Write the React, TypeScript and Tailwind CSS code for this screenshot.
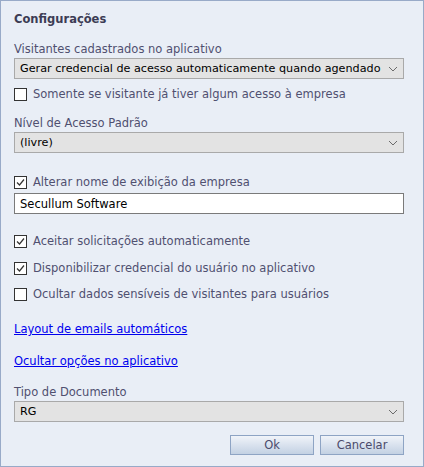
import React from "react";

const Chevron = () => (
  <svg width="10" height="6" viewBox="0 0 10 6" className="shrink-0">
    <path d="M1 1 L5 5 L9 1" fill="none" stroke="#6b6b6b" strokeWidth="1" />
  </svg>
);

const Select = ({ value }: { value: string }) => (
  <div className="flex h-[21px] items-center justify-between gap-[4px] border border-[#a9a9a9] bg-[#e3e3e3] pl-[5px] pr-[5px] text-[11.2px] text-black">
    <span className="whitespace-nowrap">{value}</span>
    <Chevron />
  </div>
);

const Check = ({ checked, label }: { checked?: boolean; label: string }) => (
  <div className="flex h-[14px] items-center gap-[6px]">
    <div className="flex h-[13px] w-[13px] shrink-0 items-center justify-center border border-[#333333] bg-white">
      {checked && (
        <svg width="11" height="11" viewBox="0 0 11 11">
          <path d="M2 5.5 L4.5 8 L9 2.5" fill="none" stroke="#333333" strokeWidth="1.2" />
        </svg>
      )}
    </div>
    <span>{label}</span>
  </div>
);

const Button = ({ label }: { label: string }) => (
  <button className="h-[20px] w-[84px] border border-[#8ea4c4] bg-gradient-to-b from-[#f1f4f9] via-[#d9e2ee] to-[#c3d1e3] leading-[18px] text-[#4b4b6b]">
    {label}
  </button>
);

export default function App() {
  return (
    <div
      className="h-[467px] w-[424px] border border-[#98aac8] bg-[#e9eef6] pl-[13px] pr-[19px] text-[11.5px] leading-[14px] text-[#505070]"
      style={{ fontFamily: '"DejaVu Sans", Verdana, sans-serif' }}
    >
      <div className="pt-[11px] font-bold text-[#3c3c54]">Configurações</div>

      <div className="mt-[16px]">Visitantes cadastrados no aplicativo</div>
      <div className="mt-[2px]">
        <Select value="Gerar credencial de acesso automaticamente quando agendado" />
      </div>
      <div className="mt-[8px]">
        <Check label="Somente se visitante já tiver algum acesso à empresa" />
      </div>

      <div className="mt-[15px]">Nível de Acesso Padrão</div>
      <div className="mt-[2px]">
        <Select value="(livre)" />
      </div>

      <div className="mt-[22px]">
        <Check checked label="Alterar nome de exibição da empresa" />
      </div>
      <div className="mt-[4px] flex h-[21px] items-center border border-[#7a7a7a] bg-white pl-[5px] text-black">
        Secullum Software
      </div>

      <div className="mt-[20px]">
        <Check checked label="Aceitar solicitações automaticamente" />
      </div>
      <div className="mt-[13px]">
        <Check checked label="Disponibilizar credencial do usuário no aplicativo" />
      </div>
      <div className="mt-[12px]">
        <Check label="Ocultar dados sensíveis de visitantes para usuários" />
      </div>

      <div className="mt-[21px]">
        <a href="#" className="text-[#0000ee] underline">Layout de emails automáticos</a>
      </div>
      <div className="mt-[18px]">
        <a href="#" className="text-[#0000ee] underline">Ocultar opções no aplicativo</a>
      </div>

      <div className="mt-[17px]">Tipo de Documento</div>
      <div className="mt-[2px]">
        <Select value="RG" />
      </div>

      <div className="mt-[13px] flex justify-end gap-[6px]">
        <Button label="Ok" />
        <Button label="Cancelar" />
      </div>
    </div>
  );
}
